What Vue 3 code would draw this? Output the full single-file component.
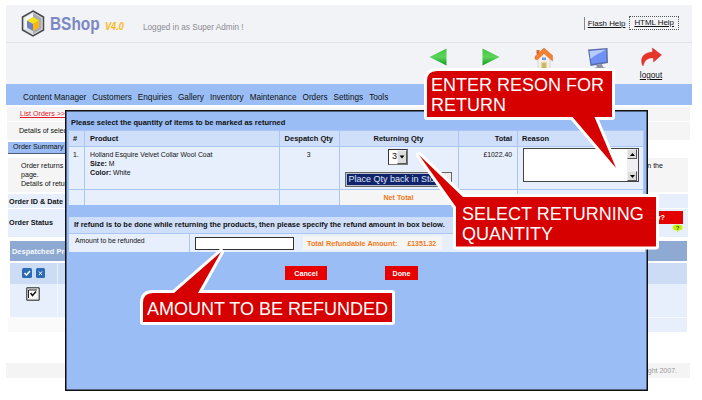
<script setup>
const menu = ['Content Manager', 'Customers', 'Enquiries', 'Gallery', 'Inventory', 'Maintenance', 'Orders', 'Settings', 'Tools']
</script>

<template>
  <div class="page">
    <div class="site">
      <header class="brand">
        <svg class="logo" width="24" height="27" viewBox="0 0 24 27">
          <path d="M12 1 22.500 7v13L12 26 1.500 20V7z" fill="#dcdde0" stroke="#444850" stroke-width="1.500" />
          <path d="M12 3 20.500 8v11L12 24z" fill="#a9abb0" />
          <path d="M3.500 8 12 3v5l-5 3v7l-3.500 1z" fill="#f5f5f6" />
          <path d="M12 7 18 10.500 12 14 6 10.500z" fill="#f4e316" />
          <path d="M6 10.500 12 14v7L6 17.500z" fill="#6f7fc4" />
          <path d="M18 10.500 12 14v7l6-3.500z" fill="#fbb50e" />
        </svg>
        <span class="name">BShop</span>
        <span class="version">V4.0</span>
        <span class="login">Logged in as Super Admin !</span>
        <nav class="help"><a class="flash">Flash Help</a><a class="html">HTML Help</a></nav>
      </header>
      <div class="toolbar">
        <svg width="20" height="20" viewBox="0 0 20 20">
          <defs><linearGradient id="gr" x1="0" y1="0" x2="0" y2="1"><stop offset="0" stop-color="#3fc43f" /><stop offset=".5" stop-color="#5ed45a" /><stop offset="1" stop-color="#0c9a20" /></linearGradient></defs>
          <path d="M18.500 1.500v17L1.500 10z" fill="url(#gr)" />
        </svg>
        <svg width="20" height="20" viewBox="0 0 20 20"><path d="M1.500 1.500v17L18.500 10z" fill="url(#gr)" /></svg>
        <svg width="20" height="24" viewBox="0 0 20 24">
          <path d="M4 9 10 4l6 6v13H4z" fill="#f1efe8" stroke="#c9c6c0" stroke-width=".6" />
          <path d="M2.500 3h3v4h-3z" fill="#d9692a" />
          <path d="M1 12V9.500L10 1l8.500 7.500V14L10 6.500 3 13z" fill="#f28230" stroke="#d8651e" stroke-width=".5" />
          <path d="M8 10.500h4v2.500H8z" fill="#7896d8" /><path d="M7.500 15.500h5V24h-5z" fill="#cdb768" />
        </svg>
        <svg width="22" height="24" viewBox="0 0 22 24">
          <path d="M1 2.500 20.500 1 21 16 3.500 19z" fill="#5a6fae" />
          <path d="M2.500 4 19 2.500 19.500 14.500 4.500 17z" fill="#6f91f4" />
          <path d="M2.500 4 19 2.500 C13 6 8 8 3.500 12z" fill="#b9cbfd" />
          <path d="M9 18 15 17 16 20 19 21v2H7v-2l3-1z" fill="#8c94a4" />
        </svg>
        <div class="logout">
          <svg width="22" height="21" viewBox="0 0 22 21"><path d="M12.500 1 21.500 8 13.500 15V11C8 10.500 4.500 13 3 19 .5 14 .5 6 12.500 5z" fill="#e8352b" stroke="#c32018" stroke-width=".4" /></svg>
          <a>logout</a>
        </div>
      </div>
      <nav class="menu"><span v-for="item in menu" :key="item">{{ item }}</span></nav>
      <div class="crumb"><a>List Orders &gt;&gt;</a></div>
      <div class="details">Details of selected order</div>
      <div class="tab">Order Summary</div>
      <div class="notice"><p>Order returns <br />page.<br />Details of returns</p><span>in the</span></div>
      <div class="field first">Order ID &amp; Date</div>
      <div class="field second">
        <span>Order Status</span>
        <div class="status"><b>y?</b>
          <svg width="11" height="9" viewBox="0 0 11 9"><path d="M5.500.5c3 0 5 1 5 3s-2 3-4 3L5 8.500V6.500C2 6.500.5 5.500.5 3.500s2-3 5-3z" fill="#c6f000" /><text x="3.800" y="6" font-size="6" font-weight="bold" font-family="Liberation Sans" fill="#456000">?</text></svg>
        </div>
      </div>
      <div class="goods">
        <div class="goodsHead">Despatched Products</div>
        <div class="picks"><div>
          <svg width="10" height="10" viewBox="0 0 10 10"><rect width="10" height="10" rx="1.500" fill="#2b6bb5" /><path d="m2.500 5 2 2 3.500-4" fill="none" stroke="#fff" stroke-width="1.500" /></svg>
          <svg width="9" height="10" viewBox="0 0 9 10"><rect width="9" height="10" rx="1.500" fill="#2b6bb5" /><path d="m3 3.500 3 3.500m0-3.500L3 7" stroke="#fff" /></svg>
        </div></div>
        <div class="checkRow"><div>
          <svg width="14" height="14" viewBox="0 0 14 14"><path d="M.8.8h12.400v12.400H.8z" fill="#eee" stroke="#222" /><path d="M2.500 3h8v8h-8z" fill="#fff" /><path d="M2.500 11V3H11" fill="none" stroke="#222" /><path d="m4.500 6 2 2.500 3.500-4" fill="none" stroke="#111" stroke-width="1.500" /></svg>
        </div></div>
        <div class="spare"></div>
      </div>
      <footer class="footer">© Copyright 2007.</footer>
    </div>

    <section class="dialog">
      <h1>Please select the quantity of items to be marked as returned</h1>
      <div class="grid head">
        <div>#</div><div>Product</div><div class="mid">Despatch Qty</div><div class="mid">Returning Qty</div><div class="end">Total</div><div>Reason</div>
      </div>
      <div class="grid item">
        <div>1.</div>
        <div class="product">Holland Esquire Velvet Collar Wool Coat<br /><b>Size:</b> M<br /><b>Color:</b> White</div>
        <div class="mid">3</div>
        <div class="choices">
          <div class="select"><span>3</span><i><svg width="6" height="4" viewBox="0 0 6 4"><path d="M.5.5h5L3 3.500z" /></svg></i></div>
          <div class="stock"><span>Place Qty back in Stock</span><i></i></div>
        </div>
        <div class="end">£1022.40</div>
        <div class="reason"><div class="area"><div class="scroll">
          <i><svg width="5" height="3" viewBox="0 0 5 3"><path d="M0 3h5L2.500 0z" /></svg></i>
          <i><svg width="5" height="3" viewBox="0 0 5 3"><path d="M0 0h5L2.500 3z" /></svg></i>
        </div></div></div>
      </div>
      <div class="grid net">
        <div></div><div></div><div></div><div class="mid">Net Total</div><div class="end">£1022.40</div><div></div>
      </div>
      <h2>If refund is to be done while returning the products, then please specify the refund amount in box below.</h2>
      <div class="refund">
        <label>Amount to be refunded</label>
        <div class="amount"><div class="input"></div><div class="total"><span>Total Refundable Amount:</span><span class="sum">£1351.32</span></div></div>
      </div>
      <div class="actions"><button class="cancel">Cancel</button><button class="done">Done</button></div>
    </section>

    <svg class="shapes" width="702" height="400" viewBox="0 0 702 400">
      <g fill="#d70000" stroke="#fff" stroke-width="6" stroke-linejoin="round" paint-order="stroke">
        <path d="M437 71H612V117H594.500L616 168 572.500 117H427V81Q427 71 437 71z" />
        <path d="M466 197H656V246.500H456V207L419 155 463 197z" />
        <path d="M153 293H174L221 252 198 293H392V322H143V303Q143 293 153 293z" />
      </g>
    </svg>
    <div class="note one">ENTER RESON FOR<br />RETURN</div>
    <div class="note two">SELECT RETURNING<br />QUANTITY</div>
    <div class="note three">AMOUNT TO BE REFUNDED</div>
  </div>
</template>

<style>
body { margin: 0; background: #fff; }
</style>

<style scoped>
* { box-sizing: border-box; }
.page { position: relative; width: 702px; height: 400px; overflow: hidden; background: #fff; font: 7.3px/9px "Liberation Sans", Arial, sans-serif; color: #111; white-space: nowrap; }
.site { padding: 5px 10px 0 6px; }
.brand { height: 38px; background: #f2f3f7; border-bottom: 1px solid #e0e2e8; display: flex; align-items: center; padding: 0 13px 0 15px; }
.logo { margin-top: -1px; }
.name { width: 50px; font: bold 17.500px/20px "Liberation Sans", sans-serif; color: #7c88c4; margin-left: 5px; transform: scaleX(.88); transform-origin: left; }
.version { width: 19px; font: italic bold 10.500px/12px "Liberation Sans", sans-serif; color: #fcb813; margin: 5px 0 0 5px; transform: scaleX(.87); transform-origin: left; }
.login { font-size: 8.200px; color: #8b8b92; margin: 8px 0 0 19px; }
.help { margin-left: auto; display: flex; align-items: center; font-size: 7.900px; margin-top: -1px; }
.help a { text-decoration: underline; }
.flash { border-left: 1px solid #888; padding: 2px 4px 2px 3px; }
.html { border: 1px dotted #555; padding: 1px 4px 2px; }
.toolbar { height: 41px; background: #f2f3f7; display: grid; grid-template-columns: 20px 20px 20px 22px 30px; column-gap: 33px; padding: 4px 0 0 422px; align-items: start; }
.logout { display: flex; flex-direction: column; align-items: center; font-size: 8.200px; margin-left: -12px; }
.logout a { text-decoration: underline; margin-top: 3px; }
.menu { height: 21px; background: #99bdf4; display: flex; gap: 6px; padding: 9px 0 0 17px; font-size: 8.200px; margin-bottom: 2px; }
.crumb { height: 14px; background: #f5f5f5; margin: 0 2px 1px 1px; padding: 3px 0 0 13px; color: #e3192a; font-size: 7.100px; }
.crumb a { text-decoration: underline; }
.details { height: 18px; background: #f5f5f5; margin: 0 2px 2px 1px; padding: 5px 12px; font-size: 7.100px; }
.tab { width: 120px; height: 12px; background: #99bdf4; border-bottom: 1px solid #4d5b76; margin-left: 2px; padding: 1px 5px; font-size: 7.100px; }
.notice { height: 34px; background: #f5f5f5; margin: 4px 4px 2px 2px; padding: 4px 25px 0 13px; display: flex; justify-content: space-between; font-size: 7.100px; }
.notice p { margin: 0; }
.field { background: #e7effc; margin: 0 4px 1px 2px; font-weight: bold; font-size: 7.250px; }
.first { height: 14px; padding: 3px 0 0 1px; }
.second { height: 28px; padding: 9px 0 0 1px; display: flex; justify-content: space-between; }
.status { width: 60px; margin: -7px 5px 0 0; display: flex; flex-direction: column; align-items: flex-end; }
.status b { width: 60px; height: 13px; background: #e50000; color: #fff; text-align: right; padding: 2px 18px; }
.goods { margin: 4px 5px 0 4px; }
.goodsHead { height: 20px; background: #8ea9d2; color: #f8fbff; font-weight: bold; padding: 6px 2px; font-size: 7.300px; letter-spacing: .1px; margin-bottom: 2px; }
.picks { height: 21px; background: #ccdcf5; display: flex; }
.picks div { width: 48px; border-right: 1px solid #e7effc; display: flex; gap: 4px; padding: 5px 0 0 12px; }
.checkRow { height: 34px; background: #e7effc; display: flex; border-bottom: 1px solid #f8faff; }
.checkRow div { width: 48px; border-right: 1px solid #f4f7fd; padding: 3px 0 0 16px; }
.spare { height: 14px; background: linear-gradient(90deg, #fafafa 300px, #e7effc 300px); margin-left: -2px; }
.footer { height: 15px; margin: 31px 2px 0 0; background: #f5f4f5; text-align: right; padding: 3px 13px; color: #999; font-size: 7px; }

.dialog { position: absolute; left: 65px; top: 110px; width: 583px; height: 281px; background: #99bdf4; border: 1.500px solid #111; padding: 7px 2px 0 2px; box-shadow: inset 0 0 0 .5px #111; }
h1, h2 { margin: 0; font-size: 7.500px; line-height: 9px; font-weight: bold; color: #111; }
h1 { height: 12px; padding-left: 3px; }
.grid { display: grid; grid-template-columns: 16px 194.500px 60.500px 119px 59px 1fr; margin-right: 1px; background: #e7effc; border: 1px solid #a9c6f5; border-width: 1px 1px 0; }
.grid > div { border-right: 1px solid #a9c6f5; padding: 3px 5px 0 4px; }
.grid > div:last-child { border-right: 0; }
.head { height: 16px; background: #cfdef9; font-weight: bold; font-size: 7.500px; }
.head > div { padding-top: 3px; }
.item { height: 43px; font-size: 6.850px; }
.item .product { padding-left: 5px; }
.head > div:nth-child(2) { padding-left: 5px; }
.product b { font-size: 7.200px; }
.net { height: 16px; font-weight: bold; color: #f47920; font-size: 7.200px; }
.net > div:nth-child(4), .net > div:nth-child(5) { background: #f5f5f5; }
.grid > .mid { text-align: center; }
.grid > .end { text-align: right; }
.item .choices { padding: 1.500px 6px 0 4px; display: flex; flex-direction: column; align-items: center; }
.select { width: 20px; height: 16px; background: #fff; border: 1px solid #777; border-top-color: #333; border-left-color: #333; display: flex; font-size: 9px; line-height: 13px; padding-left: 3px; justify-content: space-between; }
.select i, .scroll i { background: #ddd; border: 1px solid #555; border-top-color: #eee; border-left-color: #eee; width: 10px; display: flex; align-items: center; justify-content: center; }
.stock { width: 107px; height: 15px; margin-top: 7px; background: #11236b; color: #dfe5f5; border: 1px solid #666; box-shadow: inset 0 0 0 1px #b8bcc8; font-size: 9px; line-height: 12px; padding-left: 3px; display: flex; justify-content: space-between; overflow: hidden; }
.stock i { flex: none; width: 10px; background: #eee; margin-left: -10px; }
.item .reason { padding: 1px 5px; }
.area { width: 116px; height: 34px; margin-top: 0; background: #fff; border: 1px solid #444; display: flex; justify-content: flex-end; }
.scroll { width: 11px; background: #f0f0f2; display: flex; flex-direction: column; justify-content: space-between; }
.scroll i { height: 10px; }
h2 { height: 16px; margin: 12px 0 0 1px; background: #cfdef9; padding: 3px 5px; font-size: 7.480px; }
.refund { height: 19px; margin: 0 0 0 1px; background: #e7effc; border-top: 1px solid #a9c6f5; display: flex; font-size: 7.300px; }
.refund label { width: 121px; border-right: 1px solid #a9c6f5; padding: 2px 6px; font-size: 6.850px; }
.amount { display: flex; align-items: center; }
.input { width: 99px; height: 13px; background: #fff; border: 1px solid #333; margin-left: 5px; }
.total { width: 139px; height: 14px; margin-left: 9px; background: #f5f5f5; display: flex; color: #f47920; font-weight: bold; padding: 3px 4px; }
.sum { margin-left: 10px; font-size: 6.900px; }
.actions { display: flex; gap: 58px; padding: 14px 0 0 217px; }
.actions button { border: 0; padding: 0; height: 14px; background: #e60000; color: #fff; font: bold 7.200px/13px "Liberation Sans", sans-serif; }
.cancel { width: 42px; }
.done { width: 33px; }

.shapes { position: absolute; left: 0; top: 0; }
.note { position: absolute; color: #fff; font-size: 18px; line-height: 19.500px; }
.one { left: 431px; top: 76px; }
.two { left: 462px; top: 205px; }
.three { left: 147px; top: 300px; }
</style>
